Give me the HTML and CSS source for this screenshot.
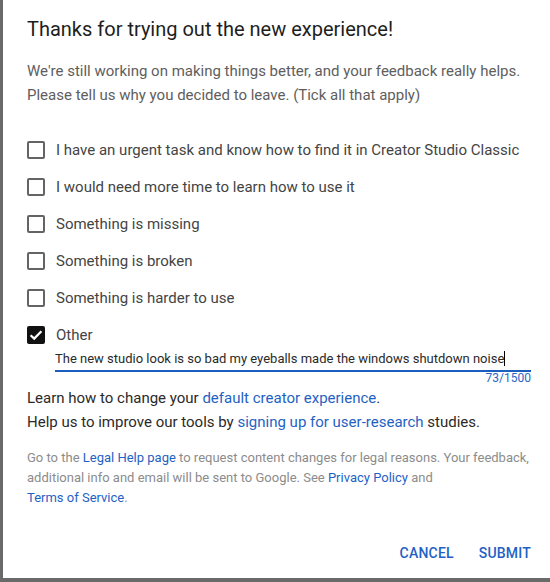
FILE: index.html
```html
<!DOCTYPE html>
<html>
<head>
<meta charset="utf-8">
<link rel="stylesheet" href="styles.css">
</head>
<body>
<div class="dialog">
  <h1 class="title">Thanks for trying out the new experience!</h1>
  <p class="intro">We're still working on making things better, and your feedback really helps.<br>Please tell us why you decided to leave. (Tick all that apply)</p>
  <div class="options">
    <div class="row"><span class="box"></span><span class="label">I have an urgent task and know how to find it in Creator Studio Classic</span></div>
    <div class="row"><span class="box"></span><span class="label">I would need more time to learn how to use it</span></div>
    <div class="row"><span class="box"></span><span class="label">Something is missing</span></div>
    <div class="row"><span class="box"></span><span class="label">Something is broken</span></div>
    <div class="row"><span class="box"></span><span class="label">Something is harder to use</span></div>
    <div class="row"><span class="box checked"><svg viewBox="0 0 18 18" width="18" height="18"><path d="M3.6 9.2 L7.2 12.6 L14.4 5.2" fill="none" stroke="#fff" stroke-width="2.2"/></svg></span><span class="label">Other</span></div>
  </div>
  <div class="other-field">
    <div class="input">The new studio look is so bad my eyeballs made the windows shutdown noise<span class="caret"></span></div>
    <div class="counter">73/1500</div>
  </div>
  <p class="learn">Learn how to change your <a>default creator experience</a>.<br>Help us to improve our tools by <a>signing up for user-research</a> studies.</p>
  <p class="legal">Go to the <a>Legal Help page</a> to request content changes for legal reasons. Your feedback, additional info and email will be sent to Google. See <a>Privacy Policy</a> and <a class="nowrap">Terms of Service</a>.</p>
  <div class="actions">
    <button class="btn">CANCEL</button>
    <button class="btn">SUBMIT</button>
  </div>
</div>
</body>
</html>
```
FILE: styles.css
```css
html, body {
  margin: 0;
  padding: 0;
  background: #6a6a6a;
  height: 582px;
  overflow: hidden;
}
.dialog {
  margin-left: 3px;
  height: 578px;
  background: #fff;
  box-sizing: border-box;
  padding: 17px 19px 0 24px;
  font-family: Roboto, "Liberation Sans", sans-serif;
  display: flex;
  flex-direction: column;
}
.title {
  margin: 0;
  font-size: 20px;
  line-height: 24px;
  font-weight: 400;
  color: #1e1e1e;
}
.intro {
  margin: 18px 0 0;
  font-size: 15px;
  line-height: 24px;
  color: #5e5e5e;
}
.options {
  margin-top: 31px;
  display: flex;
  flex-direction: column;
  gap: 13px;
}
.row {
  height: 24px;
  display: flex;
  align-items: center;
}
.box {
  width: 18px;
  height: 18px;
  box-sizing: border-box;
  border: 2px solid #646464;
  border-radius: 2px;
  margin-right: 11px;
  flex: none;
  position: relative;
}
.box.checked {
  background: #111;
  border-color: #111;
}
.box svg {
  position: absolute;
  left: -2px;
  top: -2px;
}
.label {
  font-size: 15px;
  color: #444;
}
.other-field {
  margin: 4px 0 0 28px;
}
.input {
  font-size: 13px;
  line-height: 16px;
  color: #2a2a2a;
  padding-bottom: 3px;
  border-bottom: 2px solid #1a5fc0;
  white-space: nowrap;
}
.caret {
  display: inline-block;
  width: 1px;
  height: 15px;
  background: #000;
  vertical-align: -3px;
}
.counter {
  text-align: right;
  font-size: 12px;
  line-height: 13px;
  color: #2b67c6;
}
.learn {
  margin: 1px 0 0;
  font-size: 15px;
  line-height: 24px;
  color: #2a2a2a;
}
a {
  color: #1f62c4;
  text-decoration: none;
}
.nowrap {
  white-space: nowrap;
}
.legal {
  margin: 14px 0 0;
  font-size: 13px;
  line-height: 20px;
  color: #8c8c8c;
}
.actions {
  margin-top: auto;
  margin-bottom: 17px;
  display: flex;
  justify-content: flex-end;
  gap: 25px;
}
.btn {
  background: none;
  border: none;
  padding: 0;
  font-family: Roboto, "Liberation Sans", sans-serif;
  font-size: 14px;
  font-weight: 500;
  line-height: 16px;
  color: #1f62c4;
  letter-spacing: 0.2px;
}
```
